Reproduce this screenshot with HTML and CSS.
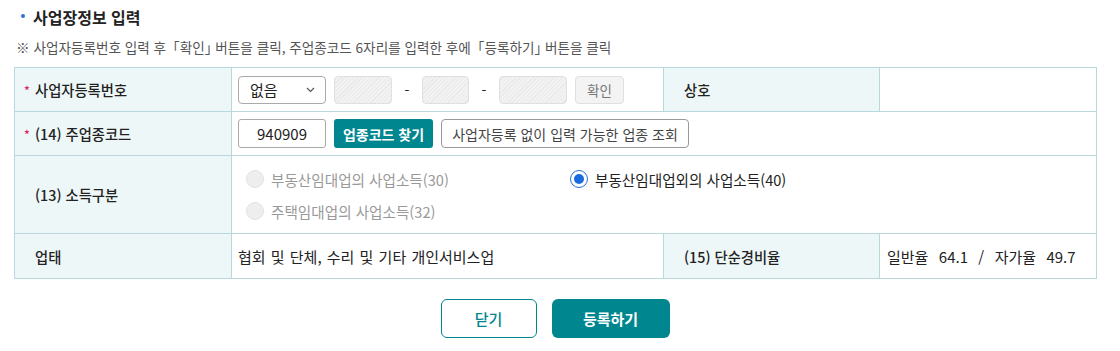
FILE: index.html
```html
<!DOCTYPE html>
<html lang="ko">
<head>
<meta charset="utf-8">
<title>사업장정보 입력</title>
<link rel="stylesheet" href="styles.css">
</head>
<body>
<div class="wrap">
  <h2 class="title"><span class="dot"></span>사업장정보 입력</h2>
  <p class="note">※ 사업자등록번호 입력 후 <span class="br open">「</span>확인<span class="br">」</span> 버튼을 클릭, 주업종코드 6자리를 입력한 후에 <span class="br open">「</span>등록하기<span class="br">」</span> 버튼을 클릭</p>
  <table class="form">
    <colgroup>
      <col class="c1"><col class="c2"><col class="c3"><col class="c4">
    </colgroup>
    <tr class="r1">
      <th class="req-th"><span class="req">*</span>사업자등록번호</th>
      <td>
        <div class="ctrls">
          <div class="select">없음<svg class="chev" width="9" height="6" viewBox="0 0 9 6"><path d="M1 1l3.5 3.5L8 1" fill="none" stroke="#555" stroke-width="1.2"/></svg></div>
          <span class="dis w58"></span>
          <span class="dash">-</span>
          <span class="dis w47"></span>
          <span class="dash">-</span>
          <span class="dis w68"></span>
          <span class="btn-gray">확인</span>
        </div>
      </td>
      <th>상호</th>
      <td></td>
    </tr>
    <tr class="r2">
      <th class="req-th"><span class="req">*</span>(14) 주업종코드</th>
      <td colspan="3">
        <div class="ctrls">
          <span class="input">940909</span>
          <span class="btn-teal">업종코드 찾기</span>
          <span class="btn-line">사업자등록 없이 입력 가능한 업종 조회</span>
        </div>
      </td>
    </tr>
    <tr class="r3">
      <th>(13) 소득구분</th>
      <td colspan="3">
        <div class="radios">
          <label class="radio off"><span class="circ"></span>부동산임대업의 사업소득(30)</label>
          <label class="radio on"><span class="circ"><span class="in"></span></span>부동산임대업외의 사업소득(40)</label>
          <label class="radio off"><span class="circ"></span>주택임대업의 사업소득(32)</label>
        </div>
      </td>
    </tr>
    <tr class="r4">
      <th>업태</th>
      <td class="val">협회 및 단체, 수리 및 기타 개인서비스업</td>
      <th>(15) 단순경비율</th>
      <td class="val rate">일반율&nbsp;&nbsp;64.1&nbsp;&nbsp;/&nbsp;&nbsp;자가율&nbsp;&nbsp;49.7</td>
    </tr>
  </table>
  <div class="actions">
    <span class="btn-close">닫기</span>
    <span class="btn-submit">등록하기</span>
  </div>
</div>
</body>
</html>
```
FILE: styles.css
```css
* { box-sizing: border-box; }
body {
  margin: 0;
  background: #fff;
  font-family: "Noto Sans CJK KR", "Noto Sans", sans-serif;
  color: #222;
}
.wrap { padding: 5px 24px 0 14px; }
.title {
  margin: 0;
  height: 24px;
  line-height: 24px;
  font-size: 16px;
  font-weight: 700;
  color: #222;
  display: flex;
  align-items: center;
}
.dot {
  width: 4px; height: 4px; border-radius: 50%;
  background: #2f6fd8;
  margin: -2px 8px 0 7px;
}
.note {
  margin: 8px 0 0 2px;
  height: 20px;
  line-height: 20px;
  font-size: 13.6px;
  color: #555;
}
.br { font-feature-settings: "halt"; }
.br.open { margin-left: 3px; }
.form {
  margin-top: 10px;
  width: 1082px;
  border-collapse: collapse;
  table-layout: fixed;
  font-size: 14px;
}
.c1 { width: 217px; }
.c2 { width: 432px; }
.c3 { width: 216px; }
.c4 { width: 217px; }
.form th, .form td {
  border: 1px solid #b9d8dc;
  padding: 0;
  vertical-align: middle;
}
.form th {
  background: #eef7f7;
  text-align: left;
  font-weight: 500;
  padding-left: 20px;
  color: #222;
  font-size: 14.3px;
}
.form th.req-th { padding-left: 9px; }
.req {
  display: inline-block;
  width: 11px;
  color: #e0245e;
  font-size: 12px;
  vertical-align: 1px;
}
.r1 { height: 44px; }
.r2 { height: 44px; }
.r3 { height: 78px; }
.r4 { height: 45px; }
.form td { padding-left: 6px; }
.form td.val { padding-left: 6px; font-size: 15px; word-spacing: 1px; }
.form td.rate { padding-left: 7px; }
.ctrls { display: flex; align-items: center; }
.select {
  width: 88px; height: 28px;
  border: 1px solid #aaa;
  border-radius: 4px;
  display: flex; align-items: center; justify-content: space-between;
  padding: 0 10px 0 11px;
  font-size: 15px;
}
.dis {
  height: 28px;
  border: 1px solid #e0e0e0;
  border-radius: 4px;
  background: repeating-linear-gradient(-45deg, #f2f2f2 0 2px, #e9e9e9 2px 3px);
}
.w58 { width: 58px; margin-left: 8px; }
.w47 { width: 47px; }
.w68 { width: 68px; }
.dash { width: 30px; text-align: center; font-size: 14px; }
.btn-gray {
  margin-left: 8px;
  width: 49px; height: 28px;
  border: 1px solid #e0e0e0;
  border-radius: 4px;
  background: #f3f3f3;
  color: #777;
  font-size: 13.5px;
  display: flex; align-items: center; justify-content: center;
}
.input {
  width: 88px; height: 29px;
  border: 1px solid #aaa;
  border-radius: 3px;
  display: flex; align-items: center; justify-content: center;
  font-size: 15px;
  color: #222;
}
.btn-teal {
  margin-left: 8px;
  width: 99px; height: 29px;
  background: #00868f;
  color: #fff;
  font-weight: 700;
  font-size: 14px;
  border-radius: 3px;
  display: flex; align-items: center; justify-content: center;
}
.btn-line {
  margin-left: 8px;
  width: 248px; height: 29px;
  border: 1px solid #999;
  border-radius: 4px;
  background: #fff;
  color: #444;
  font-size: 14px;
  display: flex; align-items: center; justify-content: center;
}
.radios {
  display: grid;
  grid-template-columns: 324px auto;
  row-gap: 10px;
  padding: 1px 0 0 8px;
}
.radio {
  display: flex; align-items: center;
  height: 22px;
  font-size: 14.6px;
}
.radio .circ {
  width: 18px; height: 18px;
  border-radius: 50%;
  margin-right: 7px;
  display: flex; align-items: center; justify-content: center;
}
.radio.off { color: #999; }
.radio.off .circ { background: #eee; border: 1px solid #e2e2e2; }
.radio.on { color: #222; }
.radio.on .circ { border: 1.5px solid #2f6fd8; background: #fff; }
.radio.on .in { width: 10px; height: 10px; border-radius: 50%; background: #1a6ae0; }
.actions {
  width: 1082px;
  display: flex;
  justify-content: center;
  gap: 15px;
  margin-top: 20px;
}
.btn-close, .btn-submit {
  height: 39px;
  border-radius: 6px;
  display: flex; align-items: center; justify-content: center;
  font-size: 15px;
}
.btn-close {
  width: 96px;
  border: 1px solid #00868f;
  color: #00868f;
  font-weight: 500;
  background: #fff;
}
.btn-submit {
  width: 118px;
  background: #00868f;
  color: #fff;
  font-weight: 700;
}
```
